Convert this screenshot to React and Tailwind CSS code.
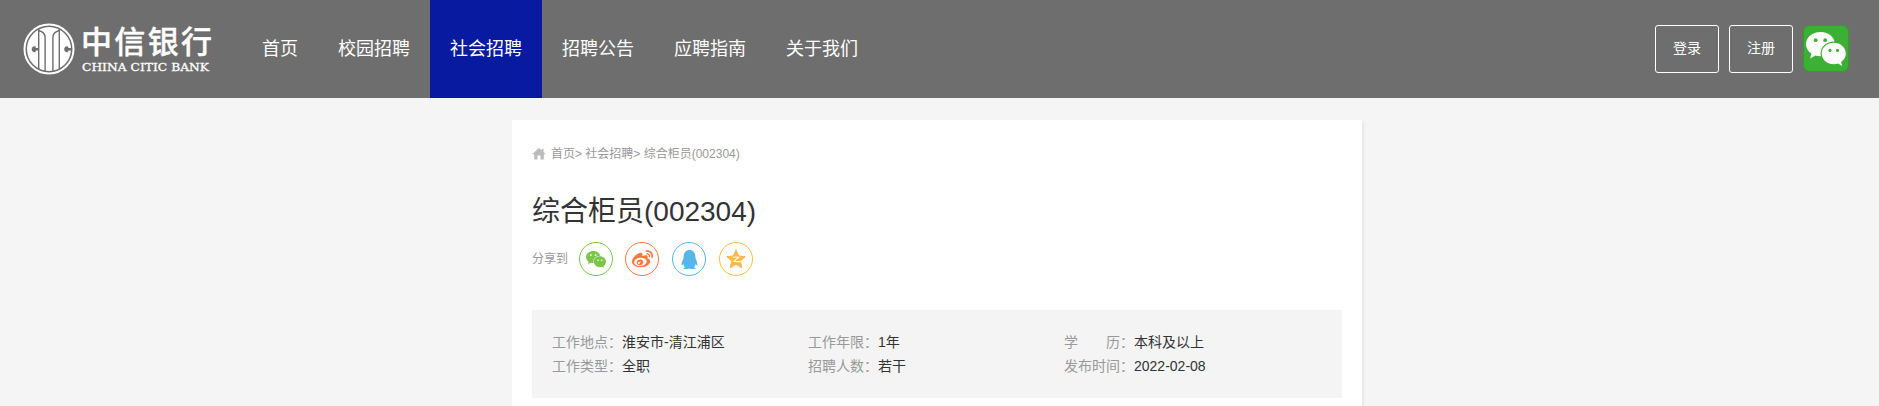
import { FaQq, FaWeibo } from 'react-icons/fa';

const navItems = ['首页', '校园招聘', '社会招聘', '招聘公告', '应聘指南', '关于我们'];

const details = [
  { label: '工作地点：', value: '淮安市-清江浦区' },
  { label: '工作年限：', value: '1年' },
  { label: '学　　历：', value: '本科及以上' },
  { label: '工作类型：', value: '全职' },
  { label: '招聘人数：', value: '若干' },
  { label: '发布时间：', value: '2022-02-08' }
];

const BankMark = () => (
  <svg viewBox="0 0 52 52" className="w-[52px] h-[52px] shrink-0">
    <circle cx="26" cy="26" r="24.5" fill="none" stroke="#fff" strokeWidth="2" />
    <circle cx="26" cy="26" r="22" fill="#fff" />
    <g fill="none" stroke="#6e6e6e" strokeWidth="1.4">
      <path d="M15.700 6V46M36.300 6V46" />
      <path d="M15.700 7.500C19.500 8.500 22.100 10 22.100 14.500V48M36.300 7.500C32.500 8.500 29.900 10 29.900 14.500V48" />
    </g>
    <path d="M15.500 25H13L12.300 23.200C9.700 23 8.700 24.500 8.700 26.200S9.700 29.400 12.300 29.200L13 27.400H15.500Z" fill="#6e6e6e" />
    <path d="M48 25H45.500L44.800 23.200C42.200 23 41.200 24.500 41.200 26.200S42.200 29.400 44.800 29.200L45.500 27.400H48Z" fill="#6e6e6e" />
  </svg>
);

const WechatBubbles = ({ className, eye, gap }) => (
  <svg viewBox="0 0 40 34" className={className}>
    <path d="M14.500 0C6.500 0 0 5.400 0 12.200c0 3.900 2.100 7.200 5.400 9.400L4.200 26.500l5.200-3c1.600.5 3.300.7 5.100.7 8 0 14.500-5.400 14.500-12S22.500 0 14.500 0Z" fill="currentColor" />
    <ellipse cx="27.800" cy="21.500" rx="13.200" ry="12" fill={gap} />
    <path d="M27.800 10.700c-6.700 0-12.100 4.800-12.100 10.800s5.400 10.800 12.100 10.800c1.500 0 3-.3 4.300-.7l4 2.400-1-4c2.900-2 4.700-5 4.700-8.500 0-6-5.300-10.800-12-10.800Z" fill="currentColor" />
    <g fill={eye}>
      <circle cx="9.700" cy="8.200" r="1.900" />
      <circle cx="19.200" cy="8.200" r="1.900" />
      <circle cx="24" cy="18.400" r="1.600" />
      <circle cx="31.500" cy="18.400" r="1.600" />
    </g>
  </svg>
);

const HomeIcon = () => (
  <svg viewBox="0 0 14 12" className="w-[14px] h-3 mr-[5px]" fill="#bbb">
    <path d="M7 0L0 6.300H2.200V11.500H5.500V7.500H8.500V11.500H11.800V6.300H14L11.500 4V1H9.800V2.500Z" />
  </svg>
);

const QzoneIcon = () => (
  <svg viewBox="0 0 20 20" className="w-5 h-5">
    <path d="M10 .8L12.700 7L19.300 7.600L14.300 12L15.900 18.800L10 15.300L4.100 18.800L5.700 12L.7 7.600L7.300 7Z" fill="#fdb751" stroke="#fdb751" strokeLinejoin="round" />
    <path d="M6.800 8.300Q10 7.700 12.600 8.300L7.800 12.300Q11 13.200 14.500 12.400" fill="none" stroke="#fff" strokeWidth="1.100" />
  </svg>
);

const Header = () => (
  <header className="h-[98px] bg-[#6e6e6e] flex items-center text-white">
    <div className="flex items-center w-[242px] pl-[23px]">
      <BankMark />
      <div className="ml-[5px] flex flex-col">
        <svg viewBox="0 0 140 36" className="w-[140px] h-9 overflow-visible">
          <text x="1" y="28.500" fontSize="31" fontWeight="500" textLength="131" fill="#fff" stroke="#fff" strokeWidth=".4" className="font-['Noto_Sans_CJK_SC',sans-serif]">中信银行</text>
        </svg>
        <svg viewBox="0 0 140 14" className="w-[140px] h-[14px] overflow-visible">
          <text x="2" y="10.500" fontSize="11.500" textLength="127" lengthAdjust="spacingAndGlyphs" fill="#fff" stroke="#fff" strokeWidth=".3" className="font-['DejaVu_Serif',serif]">CHINA CITIC BANK</text>
        </svg>
      </div>
    </div>
    <nav className="flex h-full">
      {navItems.map((item) => (
        <a key={item} className={`px-5 text-lg leading-[98px] ${item === '社会招聘' ? 'bg-[#081a9f]' : ''}`}>
          {item}
        </a>
      ))}
    </nav>
    <div className="ml-auto mr-[30px] flex items-start gap-[10px]">
      <button className="w-16 h-12 pb-[2px] border border-white rounded-[3px] text-sm">登录</button>
      <button className="w-16 h-12 pb-[2px] border border-white rounded-[3px] text-sm">注册</button>
      <div className="w-[46px] h-[47px] rounded-[7px] bg-[#3cb034] border border-[#2ba222] flex items-center justify-center">
        <WechatBubbles className="w-10 h-[34px] shrink-0" eye="#3cb034" gap="#3cb034" />
      </div>
    </div>
  </header>
);

const App = () => {
  return (
    <div className="h-[406px] overflow-hidden bg-[#f5f5f5] font-['Liberation_Sans','Noto_Sans_CJK_SC',sans-serif]">
      <Header />
      <main className="w-[850px] h-[400px] mt-[22px] ml-[512px] px-5 bg-white shadow-[2px_2px_3px_rgba(0,0,0,0.06)]">
        <div className="flex items-center h-[68px] text-xs text-[#999]">
          <HomeIcon />
          <span>首页&gt; 社会招聘&gt; 综合柜员(002304)</span>
        </div>
        <h1 className="h-12 leading-[48px] text-[28px] text-[#333]">综合柜员(002304)</h1>
        <div className="flex items-center h-[34px] mt-[6px] text-xs text-[#999]">
          <span className="w-[47px]">分享到</span>
          <div className="flex gap-[13px]">
            <a className="w-[34px] h-[34px] -mr-px rounded-full border border-[#7bc549] text-[#7bc549] flex items-center justify-center">
              <WechatBubbles className="w-5 h-[17px]" eye="#fff" gap="#fff" />
            </a>
            <a className="w-[34px] h-[34px] rounded-full border border-[#ff763b] text-[#ff763b] flex items-center justify-center">
              <FaWeibo size={21} />
            </a>
            <a className="w-[34px] h-[34px] rounded-full border border-[#56b6e7] text-[#56b6e7] flex items-center justify-center">
              <FaQq size={19} />
            </a>
            <a className="w-[34px] h-[34px] rounded-full border border-[#fdbe3d] flex items-center justify-center">
              <QzoneIcon />
            </a>
          </div>
        </div>
        <ul className="grid grid-cols-[256px_256px_256px] mt-[34px] h-[88px] p-5 bg-[#f4f4f4] text-sm leading-6">
          {details.map(({ label, value }) => (
            <li key={label} className="flex h-6">
              <span className="text-[#999]">{label}</span>
              <span className="text-[#333]">{value}</span>
            </li>
          ))}
        </ul>
      </main>
    </div>
  );
};

export default App;
